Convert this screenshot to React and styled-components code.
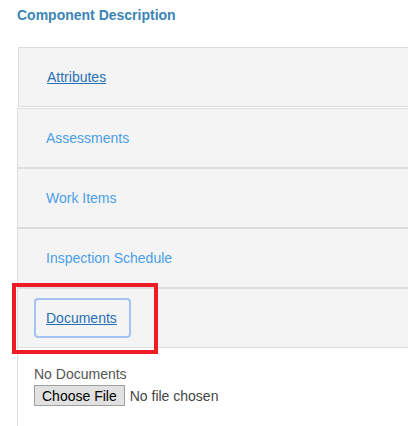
import styled, { createGlobalStyle } from 'styled-components'

const GlobalStyle = createGlobalStyle`
  html, body {
    margin: 0;
    padding: 0;
    background: #fff;
    overflow: hidden;
  }
  body {
    font-family: "Liberation Sans", Arial, sans-serif;
    font-size: 14px;
    color: #333;
  }
`;

const sections = [
  { title: 'Attributes', active: true },
  { title: 'Assessments' },
  { title: 'Work Items' },
  { title: 'Inspection Schedule' },
];

const App = () => {
  return (
    <>
      <GlobalStyle />
      <Page>
        <Title>Component Description</Title>
        <Accordion>
          {sections.map(({ title, active }, i) => (
            <Item key={title} $first={i === 0}>
              <Header>
                <HeaderLink href="#" $active={active}>{title}</HeaderLink>
              </Header>
            </Item>
          ))}
          <Highlighted>
            <Item>
              <Header>
                <HeaderLink href="#" $active $focused>Documents</HeaderLink>
              </Header>
            </Item>
            <Annotation />
          </Highlighted>
          <Panel>
            <Empty>No Documents</Empty>
            <FileRow>
              <FileButton type="button">Choose File</FileButton>
              <FileName>No file chosen</FileName>
            </FileRow>
          </Panel>
        </Accordion>
      </Page>
    </>
  )
}

export default App

const Page = styled.div`
  padding: 7px 0 0 17px;
`;

const Title = styled.h4`
  margin: 0 0 23px;
  font-size: 14px;
  font-weight: bold;
  line-height: 17px;
  color: #3a85b5;
`;

const Accordion = styled.div`
  display: flex;
  flex-direction: column;
`;

const Item = styled.div`
  border: 1px solid #ddd;
  border-right: none;
  background: #f4f4f4;
  margin-left: ${({ $first }) => ($first ? '1px' : '0')};
  margin-bottom: ${({ $first }) => ($first ? '1px' : '0')};
`;

const Header = styled.div`
  padding: 9px 16px;
  height: 40px;
  display: flex;
  align-items: center;
`;

const HeaderLink = styled.a`
  display: inline-block;
  padding: 8px 12px 8px 10px;
  line-height: 20px;
  font-size: 14px;
  border: 2px solid ${({ $focused }) => ($focused ? '#a2c3f3' : 'transparent')};
  border-radius: 4px;
  color: ${({ $active }) => ($active ? '#2870b5' : '#4a9fe8')};
  text-decoration: ${({ $active }) => ($active ? 'underline' : 'none')};
`;

const Highlighted = styled.div`
  position: relative;
`;

const Annotation = styled.div`
  position: absolute;
  left: -5px;
  top: -5px;
  width: 138px;
  height: 63px;
  border: 4px solid #ee1c25;
  pointer-events: none;
`;

const Panel = styled.div`
  border-left: 1px solid #ddd;
  padding: 17px 16px 30px;
`;

const Empty = styled.div`
  line-height: 18px;
  color: #555;
  margin-bottom: 2px;
`;

const FileRow = styled.div`
  display: flex;
  align-items: center;
  gap: 5px;
`;

const FileButton = styled.button`
  font-family: "Liberation Sans", Arial, sans-serif;
  font-size: 14px;
  height: 21px;
  padding: 0 7px;
  background: #e1e1e1;
  border: 1px solid #a0a0a0;
  border-radius: 0;
  color: #000;
`;

const FileName = styled.span`
  color: #444;
`;
